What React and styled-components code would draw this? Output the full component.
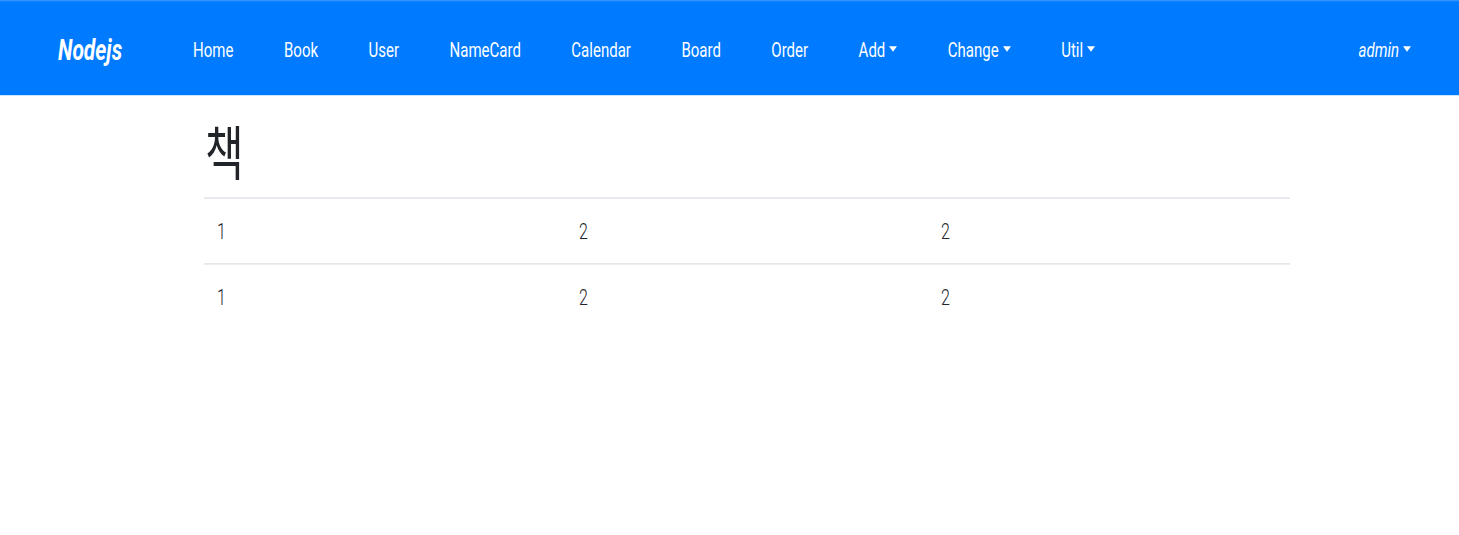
import React from 'react';
import styled, { createGlobalStyle } from 'styled-components';

// The reference is a Bootstrap-like page that was captured stretched
// vertically, so the whole page is laid out at natural height and then
// scaled on the Y axis once.
const STRETCH = 1.4;

const GlobalStyle = createGlobalStyle`
  html, body {
    margin: 0;
    padding: 0;
    background: #fff;
    overflow: hidden;
  }
  body {
    font-family: Roboto, 'Liberation Sans', Arial, sans-serif;
    color: #212529;
  }
`;

const Stage = styled.div`
  width: 1459px;
  height: ${535 / STRETCH}px;
  transform: scaleY(${STRETCH});
  transform-origin: 0 0;
`;

const Navbar = styled.nav`
  display: flex;
  align-items: center;
  height: 68px;
  box-sizing: border-box;
  padding: 2px 48px 0 58px;
  background-color: #007bff;
  border-top: 1px solid #2f93ff;
`;

const Brand = styled.a`
  font-size: 21px;
  font-weight: 700;
  font-style: italic;
  color: #fff;
  text-decoration: none;
  line-height: 30px;
  margin-right: 71px;
`;

const NavList = styled.ul`
  display: flex;
  align-items: center;
  gap: 50.5px;
  list-style: none;
  margin: 0;
  padding: 0;
  flex: 1;
`;

const NavLink = styled.a`
  display: inline-flex;
  align-items: center;
  font-size: 15px;
  line-height: 24px;
  color: #fff;
  text-decoration: none;
  font-style: ${(p) => (p.$italic ? 'italic' : 'normal')};
  white-space: nowrap;
`;

const Caret = styled.span`
  display: inline-block;
  margin-left: 4px;
  width: 0;
  height: 0;
  border-top: 4.5px solid #fff;
  border-left: 4.5px solid transparent;
  border-right: 4.5px solid transparent;
  transform: translateY(-1px);
`;

const Main = styled.main`
  padding: 0 169px 0 204px;
`;

const Heading = styled.h1`
  margin: 14px 0 9px 1px;
  font-family: 'Noto Sans CJK KR', 'Noto Sans', sans-serif;
  font-size: 42px;
  font-weight: 400;
  line-height: 1.2;
  color: #212529;
`;

const Table = styled.table`
  width: 100%;
  border-collapse: collapse;
  table-layout: fixed;
`;

const Cell = styled.td`
  padding: 12px 13px 10px;
  border-top: 1px solid #dee2e6;
  font-size: 16px;
  font-weight: 300;
  line-height: 24px;
  color: #212529;
  vertical-align: top;
`;

const links = [
  { label: 'Home' },
  { label: 'Book' },
  { label: 'User' },
  { label: 'NameCard' },
  { label: 'Calendar' },
  { label: 'Board' },
  { label: 'Order' },
  { label: 'Add', dropdown: true },
  { label: 'Change', dropdown: true },
  { label: 'Util', dropdown: true }
];

const books = [
  ['1', '2', '2'],
  ['1', '2', '2']
];

export default function App() {
  return (
    <>
      <GlobalStyle />
      <Stage>
        <Navbar>
          <Brand href="#">Nodejs</Brand>
          <NavList>
            {links.map((l) => (
              <li key={l.label}>
                <NavLink href="#">
                  {l.label}
                  {l.dropdown && <Caret />}
                </NavLink>
              </li>
            ))}
          </NavList>
          <NavLink href="#" $italic>
            admin
            <Caret />
          </NavLink>
        </Navbar>
        <Main>
          <Heading>책</Heading>
          <Table>
            <tbody>
              {books.map((row, i) => (
                <tr key={i}>
                  {row.map((v, j) => (
                    <Cell key={j}>{v}</Cell>
                  ))}
                </tr>
              ))}
            </tbody>
          </Table>
        </Main>
      </Stage>
    </>
  );
}
